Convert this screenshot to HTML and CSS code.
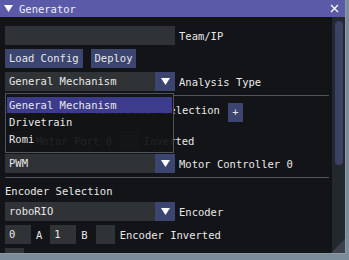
FILE: index.html
```html
<!DOCTYPE html>
<html>
<head>
<meta charset="utf-8">
<link rel="stylesheet" href="styles.css">
</head>
<body>
<div class="window">
  <div class="titlebar">
    <svg class="tri" width="9" height="8" viewBox="0 0 9 8"><polygon points="0,0 9,0 4.5,7" fill="#ffffff"/></svg>
    <span class="title">Generator</span>
    <svg class="close" width="9" height="9" viewBox="0 0 9 9"><path d="M1 1 L8 8 M8 1 L1 8" stroke="#ffffff" stroke-width="1.3"/></svg>
  </div>
  <div class="body">
    <div class="content">
      <div class="row">
        <div class="frame wide"></div>
        <span class="label">Team/IP</span>
      </div>
      <div class="row">
        <div class="btn">Load Config</div>
        <div class="btn">Deploy</div>
      </div>
      <div class="row">
        <div class="combo"><span class="val">General Mechanism</span><div class="arrow"><svg width="9" height="7" viewBox="0 0 9 7"><polygon points="0,0 9,0 4.5,7" fill="#ffffff"/></svg></div></div>
        <span class="label">Analysis Type</span>
      </div>
      <div class="sep"></div>
      <div class="row textrow">
        <span class="text">Motor / Motor Controller Selection</span>
        <div class="btn small">+</div>
      </div>
      <div class="row motor">
        <div class="frame num">0</div>
        <span class="plain">Motor Port 0</span>
        <div class="frame check"></div>
        <span class="plain">Inverted</span>
      </div>
      <div class="row">
        <div class="combo"><span class="val">PWM</span><div class="arrow"><svg width="9" height="7" viewBox="0 0 9 7"><polygon points="0,0 9,0 4.5,7" fill="#ffffff"/></svg></div></div>
        <span class="label">Motor Controller 0</span>
      </div>
      <div class="sep"></div>
      <div class="text heading">Encoder Selection</div>
      <div class="row">
        <div class="combo"><span class="val">roboRIO</span><div class="arrow"><svg width="9" height="7" viewBox="0 0 9 7"><polygon points="0,0 9,0 4.5,7" fill="#ffffff"/></svg></div></div>
        <span class="label">Encoder</span>
      </div>
      <div class="row">
        <div class="frame num">0</div>
        <span class="plain">A</span>
        <div class="frame num">1</div>
        <span class="plain">B</span>
        <div class="frame check"></div>
        <span class="plain">Encoder Inverted</span>
      </div>
      <div class="row">
        <div class="frame check"></div>
        <span class="plain">Reduce Encoding</span>
      </div>

      <div class="popup">
        <div class="item sel">General Mechanism</div>
        <div class="item">Drivetrain</div>
        <div class="item">Romi</div>
      </div>
    </div>
    <div class="scrollbar">
      <div class="grab"></div>
      <div class="grip"></div>
    </div>
  </div>
</div>
</body>
</html>
```

FILE: styles.css
```css
html, body {
  margin: 0;
  padding: 0;
  background: #7b8d9b;
}
body {
  width: 349px;
  height: 260px;
  overflow: hidden;
  font-family: "DejaVu Sans Mono", "Liberation Mono", monospace;
  font-size: 10.5px;
  color: #e8e8e8;
}
.window {
  width: 345px;
  height: 253px;
  background: #121417;
  border-right: 1px solid #8a9aa6;
  border-bottom: 1px solid #8a9aa6;
  box-sizing: content-box;
  display: flex;
  flex-direction: column;
  overflow: hidden;
}
.titlebar {
  height: 17px;
  flex: none;
  background: #5a5aa8;
  display: flex;
  align-items: center;
  padding-left: 4px;
  padding-right: 6px;
}
.titlebar .tri { margin-right: 6px; }
.titlebar .title { flex: 1; color: #f0f0f0; }
.body {
  flex: 1;
  display: flex;
  min-height: 0;
}
.content {
  flex: 1;
  position: relative;
  padding: 9px 0 0 5px;
  overflow: hidden;
}
.row {
  display: flex;
  align-items: center;
  height: 19px;
  margin-bottom: 4px;
  white-space: pre;
}
.frame {
  background: #303336;
  height: 19px;
  box-sizing: border-box;
}
.frame.wide { width: 170px; }
.frame.num {
  width: 26px;
  padding-left: 4px;
  line-height: 19px;
  margin-right: 5px;
}
.frame.check {
  width: 19px;
  margin-right: 5px;
}
.label { margin-left: 4px; }
.plain { margin-right: 8px; }
.btn {
  background: #3b4570;
  height: 19px;
  line-height: 19px;
  padding: 0 4px;
  margin-right: 8px;
}
.btn.small {
  padding: 0 4px;
  width: 7px;
  text-align: center;
}
.combo {
  width: 170px;
  height: 19px;
  display: flex;
  background: #303336;
}
.combo .val {
  flex: 1;
  padding-left: 4px;
  line-height: 19px;
}
.combo .arrow {
  width: 20px;
  background: #3b4570;
  display: flex;
  align-items: center;
  justify-content: center;
}
.sep {
  width: 324px;
  height: 1px;
  background: #4f545a;
  margin: 0 0 7px 0;
}
.textrow {
  align-items: flex-start;
  margin-bottom: 9px;
}
.textrow .text { margin-right: 8px; line-height: 13px; padding-top: 1px; }
.heading {
  margin-bottom: 4px;
  height: 13px;
  line-height: 13px;
}
.popup {
  position: absolute;
  left: 5px;
  top: 76px;
  width: 169px;
  height: 60px;
  box-sizing: border-box;
  border: 1px solid #50545a;
  background: rgba(17, 19, 22, 0.93);
  padding: 3px 1px 0 1px;
}
.item {
  height: 17px;
  line-height: 16px;
  padding-left: 2px;
}
.item.sel {
  background: #3d3c8c;
  height: 16px;
  margin-bottom: 1px;
}
.scrollbar {
  width: 13px;
  flex: none;
  background: #23272e;
  position: relative;
}
.grab {
  position: absolute;
  left: 3px;
  top: 4px;
  width: 8px;
  height: 144px;
  border-radius: 4px;
  background: #3c4265;
}
.grip {
  position: absolute;
  right: 0;
  bottom: 0;
  width: 0;
  height: 0;
  border-left: 14px solid transparent;
  border-bottom: 14px solid #3a414c;
}
```
